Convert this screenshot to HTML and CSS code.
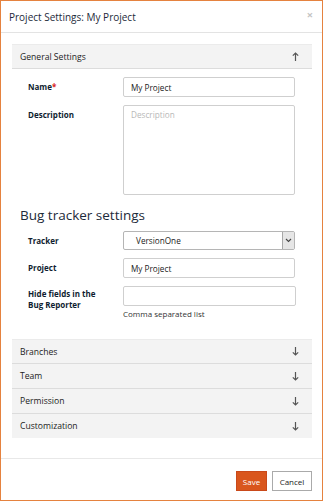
FILE: index.html
```html
<!DOCTYPE html>
<html>
<head>
<meta charset="utf-8">
<link rel="stylesheet" href="styles.css">
</head>
<body>
<div class="dialog">
  <div class="dlg-header">
    <span class="title">Project Settings: My Project</span>
    <span class="close">×</span>
  </div>
  <div class="dlg-body">
    <div class="panel">
      <div class="panel-head">
        <span>General Settings</span>
        <svg class="arrow" width="7" height="9" viewBox="0 0 7 9"><path d="M3.5 9V1.2M0.8 3.6L3.5 1L6.2 3.6" fill="none" stroke="#555" stroke-width="1.2"/></svg>
      </div>
      <div class="panel-body">
        <div class="form-row">
          <label class="lbl">Name<span class="req">*</span></label>
          <input class="field" type="text" value="My Project">
        </div>
        <div class="form-row">
          <label class="lbl">Description</label>
          <textarea class="field area" placeholder="Description"></textarea>
        </div>
        <h2 class="section">Bug tracker settings</h2>
        <div class="form-row">
          <label class="lbl">Tracker</label>
          <div class="field select"><span class="sel-val">VersionOne</span><span class="sel-btn"><svg width="7" height="5" viewBox="0 0 7 5"><path d="M1 1L3.5 3.5L6 1" fill="none" stroke="#444" stroke-width="1.1"/></svg></span></div>
        </div>
        <div class="form-row">
          <label class="lbl">Project</label>
          <input class="field" type="text" value="My Project">
        </div>
        <div class="form-row">
          <label class="lbl two">Hide fields in the Bug Reporter</label>
          <div class="col">
            <input class="field" type="text" value="">
            <div class="help">Comma separated list</div>
          </div>
        </div>
      </div>
    </div>
    <div class="accordion">
      <div class="acc-row"><span>Branches</span><svg class="arrow" width="7" height="9" viewBox="0 0 7 9"><path d="M3.5 0V7.8M0.8 5.4L3.5 8L6.2 5.4" fill="none" stroke="#555" stroke-width="1.2"/></svg></div>
      <div class="acc-row"><span>Team</span><svg class="arrow" width="7" height="9" viewBox="0 0 7 9"><path d="M3.5 0V7.8M0.8 5.4L3.5 8L6.2 5.4" fill="none" stroke="#555" stroke-width="1.2"/></svg></div>
      <div class="acc-row"><span>Permission</span><svg class="arrow" width="7" height="9" viewBox="0 0 7 9"><path d="M3.5 0V7.8M0.8 5.4L3.5 8L6.2 5.4" fill="none" stroke="#555" stroke-width="1.2"/></svg></div>
      <div class="acc-row"><span>Customization</span><svg class="arrow" width="7" height="9" viewBox="0 0 7 9"><path d="M3.5 0V7.8M0.8 5.4L3.5 8L6.2 5.4" fill="none" stroke="#555" stroke-width="1.2"/></svg></div>
    </div>
  </div>
  <div class="dlg-footer">
    <button class="btn save">Save</button>
    <button class="btn cancel">Cancel</button>
  </div>
</div>
</body>
</html>
```
FILE: styles.css
```css
html, body {
  margin: 0;
  padding: 0;
  background: #fff;
}
body {
  width: 324px;
  height: 501px;
  font-family: "Open Sans", "DejaVu Sans", sans-serif;
  color: #222;
}
.dialog {
  box-sizing: border-box;
  width: 323px;
  height: 501px;
  border: 1px solid #e5823f;
  display: flex;
  flex-direction: column;
  background: #fff;
}
.dlg-header {
  height: 31px;
  border-bottom: 1px solid #e3e3e3;
  display: flex;
  align-items: center;
  justify-content: space-between;
  padding: 0 8px;
}
.title {
  font-size: 10px;
  color: #1d2a3a;
}
.close {
  font-size: 11px;
  color: #c4c4c4;
  font-weight: bold;
  margin-top: -5px;
  margin-right: 1px;
}
.dlg-body {
  flex: 1;
  padding: 11px 10px 0 11px;
}
.panel-head {
  background: #f3f3f3;
  border-top: 1px solid #ebebeb;
  border-bottom: 1px solid #dcdcdc;
  box-sizing: border-box;
  height: 25px;
  display: flex;
  align-items: center;
  justify-content: space-between;
  padding: 0 13px 0 8px;
  font-size: 8.6px;
  color: #222;
}
.arrow {
  display: block;
}
.panel-body {
  padding: 8px 17px 0 16px;
}
.form-row {
  display: flex;
  align-items: flex-start;
  margin-bottom: 8px;
}
.lbl {
  width: 95px;
  flex: none;
  font-size: 8px;
  font-weight: bold;
  color: #0f1d30;
  line-height: 11px;
  padding-top: 4px;
}
.lbl.two {
  width: 80px;
  margin-right: 15px;
  padding-top: 2px;
}
.req {
  color: #d9261c;
}
.field {
  box-sizing: border-box;
  width: 173px;
  height: 20px;
  border: 1px solid #cfcfcf;
  border-radius: 2px;
  font-family: "Open Sans", "DejaVu Sans", sans-serif;
  font-size: 8.2px;
  color: #222;
  padding: 0 7px;
  margin: 0;
  outline: none;
  background: #fff;
}
.area {
  height: 90px;
  resize: none;
  padding: 3px 7px;
  line-height: 11px;
}
.area::placeholder {
  color: #b8b8b8;
}
.section {
  font-size: 13.5px;
  font-weight: normal;
  color: #1d2a3a;
  line-height: 18px;
  margin: 11px 0 7px -8px;
}
.select {
  display: flex;
  align-items: stretch;
  padding: 0;
  border-color: #b5b5b5;
  height: 19px;
}
.sel-val {
  flex: 1;
  display: flex;
  align-items: center;
  padding-left: 12px;
}
.sel-btn {
  width: 11px;
  background: #e6e6e6;
  border-left: 1px solid #a8a8a8;
  display: flex;
  align-items: center;
  justify-content: center;
}
.col {
  display: flex;
  flex-direction: column;
}
.help {
  font-size: 8px;
  color: #333;
  margin-top: 2px;
}
.accordion {
  margin-top: 20px;
  background: #f3f3f3;
}
.acc-row {
  height: 25px;
  box-sizing: border-box;
  display: flex;
  align-items: center;
  justify-content: space-between;
  padding: 0 13px 0 8px;
  font-size: 8.6px;
  color: #222;
  border-bottom: 1px solid #dcdcdc;
}
.acc-row:first-child {
  border-top: 1px solid #ebebeb;
}
.acc-row:last-child {
  border-bottom: none;
  height: 24px;
}
.dlg-footer {
  height: 42px;
  box-sizing: border-box;
  border-top: 1px solid #e8e8e8;
  display: flex;
  justify-content: flex-end;
  align-items: flex-start;
  padding: 12px 10px 0 0;
  gap: 5px;
}
.btn {
  height: 20px;
  font-family: "Open Sans", "DejaVu Sans", sans-serif;
  font-size: 8px;
  padding: 0;
  margin: 0;
  border-radius: 0;
  cursor: pointer;
}
.save {
  width: 31px;
  background: #d9561d;
  border: 1px solid #c9491a;
  color: #fff;
}
.cancel {
  width: 40px;
  background: #fff;
  border: 1px solid #aaa;
  color: #222;
}
```
